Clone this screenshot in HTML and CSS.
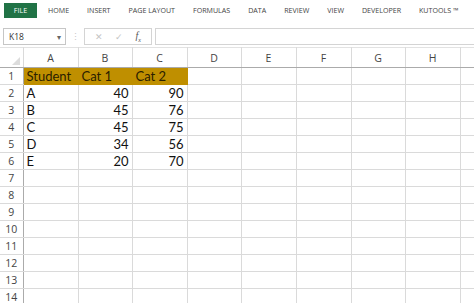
FILE: index.html
```html
<!DOCTYPE html>
<html lang="en">
<head>
    <meta charset="UTF-8">
    <meta name="viewport" content="width=device-width, initial-scale=1.0">
    <title>Book1 - Excel</title>
    <link rel="stylesheet" href="styles.css">
</head>
<body>
    <div class="tabs">
        <span class="tab file">FILE</span>
        <span class="tab">HOME</span>
        <span class="tab">INSERT</span>
        <span class="tab">PAGE LAYOUT</span>
        <span class="tab">FORMULAS</span>
        <span class="tab">DATA</span>
        <span class="tab">REVIEW</span>
        <span class="tab">VIEW</span>
        <span class="tab">DEVELOPER</span>
        <span class="tab">KUTOOLS ™</span>
    </div>

    <div class="formula-bar">
        <div class="name-box">
            <span>K18</span>
            <span class="arrow">▾</span>
        </div>
        <span class="grip">⋮</span>
        <div class="fx-buttons">
            <span class="btn">✕</span>
            <span class="btn">✓</span>
            <span class="btn fx">f<sub>x</sub></span>
        </div>
        <div class="formula-input"></div>
    </div>

    <div class="sheet-wrap">
        <table class="sheet">
            <colgroup>
                <col class="c-head">
                <col class="c-wide"><col class="c-narrow"><col class="c-wide"><col class="c-narrow">
                <col class="c-wide"><col class="c-wide"><col class="c-narrow"><col class="c-wide"><col class="c-wide">
            </colgroup>
            <thead>
                <tr>
                    <th class="corner"><span class="tri"></span></th>
                    <th>A</th><th>B</th><th>C</th><th>D</th><th>E</th><th>F</th><th>G</th><th>H</th><th></th>
                </tr>
            </thead>
            <tbody>
                <tr><th>1</th><td class="hl">Student</td><td class="hl">Cat 1</td><td class="hl">Cat 2</td><td></td><td></td><td></td><td></td><td></td><td></td></tr>
                <tr><th>2</th><td>A</td><td class="num">40</td><td class="num">90</td><td></td><td></td><td></td><td></td><td></td><td></td></tr>
                <tr><th>3</th><td>B</td><td class="num">45</td><td class="num">76</td><td></td><td></td><td></td><td></td><td></td><td></td></tr>
                <tr><th>4</th><td>C</td><td class="num">45</td><td class="num">75</td><td></td><td></td><td></td><td></td><td></td><td></td></tr>
                <tr><th>5</th><td>D</td><td class="num">34</td><td class="num">56</td><td></td><td></td><td></td><td></td><td></td><td></td></tr>
                <tr><th>6</th><td>E</td><td class="num">20</td><td class="num">70</td><td></td><td></td><td></td><td></td><td></td><td></td></tr>
                <tr><th>7</th><td></td><td></td><td></td><td></td><td></td><td></td><td></td><td></td><td></td></tr>
                <tr><th>8</th><td></td><td></td><td></td><td></td><td></td><td></td><td></td><td></td><td></td></tr>
                <tr><th>9</th><td></td><td></td><td></td><td></td><td></td><td></td><td></td><td></td><td></td></tr>
                <tr><th>10</th><td></td><td></td><td></td><td></td><td></td><td></td><td></td><td></td><td></td></tr>
                <tr><th>11</th><td></td><td></td><td></td><td></td><td></td><td></td><td></td><td></td><td></td></tr>
                <tr><th>12</th><td></td><td></td><td></td><td></td><td></td><td></td><td></td><td></td><td></td></tr>
                <tr><th>13</th><td></td><td></td><td></td><td></td><td></td><td></td><td></td><td></td><td></td></tr>
                <tr><th>14</th><td></td><td></td><td></td><td></td><td></td><td></td><td></td><td></td><td></td></tr>
            </tbody>
        </table>
    </div>
</body>
</html>
```

FILE: styles.css
```css
body {
    margin: 0;
    background: #fff;
    overflow: hidden;
    font-family: "Open Sans", sans-serif;
    color: #444;
}

/* ribbon tabs */
.tabs {
    display: flex;
    align-items: center;
    gap: 18px;
    height: 21px;
    padding-left: 4px;
}

.tab {
    font-size: 7.1px;
    color: #444;
    line-height: 15px;
}

.tab.file {
    background: #217346;
    color: #fff;
    width: 33px;
    text-align: center;
    margin-right: -7px;
}

/* formula bar */
.formula-bar {
    display: flex;
    align-items: center;
    height: 17px;
    margin-top: 7px;
    padding-left: 3px;
}

.name-box {
    width: 63px;
    height: 17px;
    border: 1px solid #c6c6c6;
    display: flex;
    align-items: center;
    justify-content: space-between;
    padding: 0 4px 0 5px;
    box-sizing: border-box;
    font-size: 8.5px;
    color: #333;
}

.name-box .arrow {
    font-size: 8px;
    color: #666;
}

.grip {
    width: 18px;
    text-align: center;
    color: #c8c8c8;
    font-size: 9px;
}

.fx-buttons {
    width: 68px;
    height: 17px;
    box-sizing: border-box;
    border: 1px solid #d4d4d4;
    display: flex;
    align-items: center;
    justify-content: space-around;
    padding: 0 4px;
}

.btn {
    color: #c4c4c4;
    font-size: 9px;
}

.btn.fx {
    color: #555;
    font-family: "Liberation Serif", serif;
    font-style: italic;
    font-size: 10px;
}

.btn.fx sub {
    font-size: 6px;
}

.formula-input {
    flex: 1;
    height: 17px;
    box-sizing: border-box;
    border: 1px solid #d4d4d4;
    border-right: none;
    margin-left: 3px;
}

/* sheet grid */
.sheet-wrap {
    overflow: hidden;
    margin-top: 2px;
}

.sheet {
    border-collapse: collapse;
    table-layout: fixed;
    width: 515px;
}

.c-head { width: 23px; }
.c-wide { width: 55px; }
.c-narrow { width: 54px; }

.sheet thead th {
    height: 19px;
    padding: 0;
    font-weight: normal;
    font-size: 10.5px;
    color: #444;
    border-left: 1px solid #dadada;
    border-right: 1px solid #dadada;
    border-bottom: 1px solid #ababab;
    border-top: 1px solid #e2e2e2;
    text-align: center;
    vertical-align: middle;
}

.sheet th.corner {
    position: relative;
    border-left: none;
}

.tri {
    position: absolute;
    right: 3px;
    bottom: 2px;
    width: 0;
    height: 0;
    border-left: 8px solid transparent;
    border-bottom: 8px solid #dcdcdc;
}

.sheet tbody th {
    height: 16px;
    padding: 0;
    font-weight: normal;
    font-size: 10.5px;
    color: #444;
    text-align: center;
    border-right: 1px solid #ababab;
    border-bottom: 1px solid #dadada;
}

.sheet td {
    height: 16px;
    padding: 0 3px;
    border: 1px solid #dadada;
    font-family: Lato, sans-serif;
    font-size: 13px;
    color: #111;
    white-space: nowrap;
    overflow: hidden;
    line-height: 14px;
}

.sheet td.num {
    text-align: right;
}

.sheet td.hl {
    background: #bf8f00;
    color: #2a2000;
    border-color: #bf8f00;
}
```
